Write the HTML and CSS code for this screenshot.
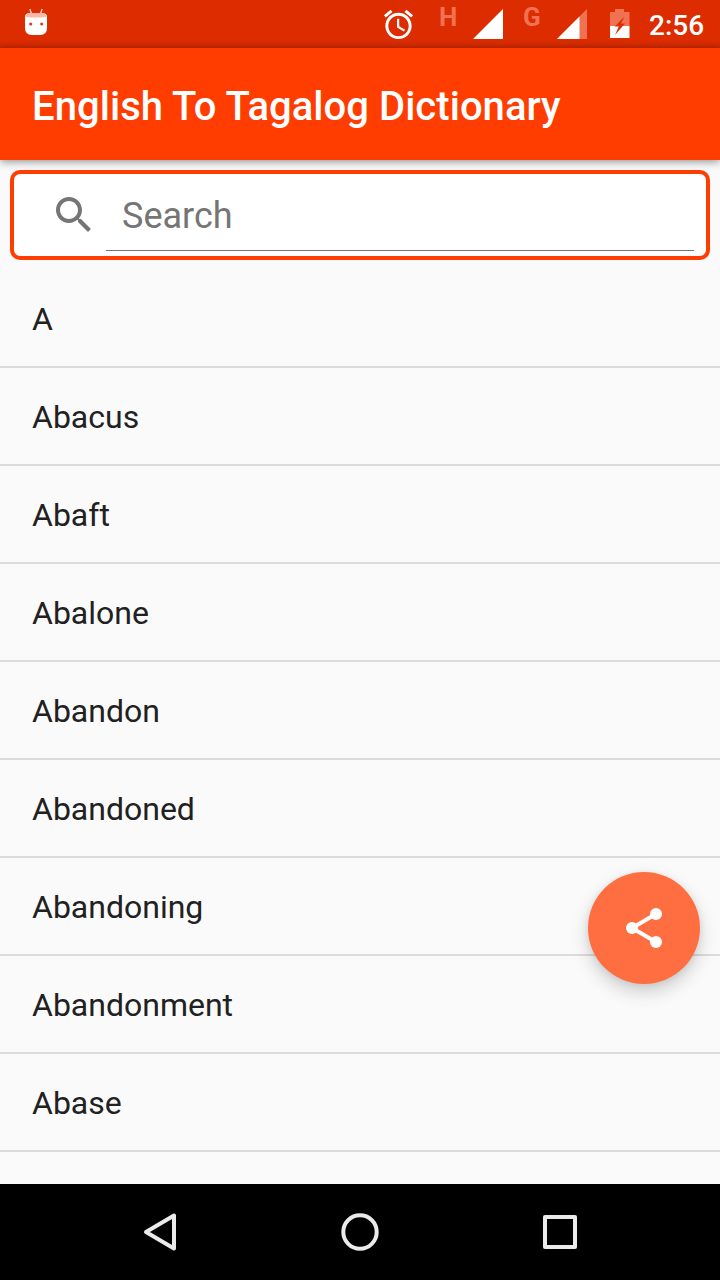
FILE: index.html
```html
<!DOCTYPE html>
<html lang="en">
<head>
    <meta charset="utf-8">
    <title>English To Tagalog Dictionary</title>
    <link rel="stylesheet" href="styles.css">
</head>
<body>
<div class="screen">
    <div class="status-bar">
        <svg class="debug-icon" width="24" height="28" viewBox="0 0 24 28">
            <path d="M5.8 1l1.6 4.5M18.2 1l-1.6 4.5" stroke="#ffc8b8" stroke-width="1.5" fill="none"/>
            <path d="M1 9Q1 5 6 5H18Q23 5 23 9V20Q23 27 16 27H8Q1 27 1 20Z" fill="#fff"/>
            <path d="M2 9Q2 5 6 5H18Q22 5 22 9Q12 10 2 9Z" fill="#ffb7a3"/>
            <circle cx="6.7" cy="16" r="1.6" fill="#d83a2b"/>
            <circle cx="17.7" cy="16" r="1.6" fill="#d83a2b"/>
        </svg>
        <div class="status-right">
            <svg class="alarm-icon" width="35" height="35" viewBox="0 0 24 24" fill="#fff">
                <path d="M22 5.72l-4.6-3.86-1.29 1.53 4.6 3.86L22 5.72zM7.88 3.39L6.6 1.86 2 5.71l1.29 1.53 4.59-3.85zM12.5 8H11v6l4.75 2.85.75-1.23-4-2.37V8zM12 4c-4.97 0-9 4.03-9 9s4.02 9 9 9c4.97 0 9-4.03 9-9s-4.03-9-9-9zm0 16c-3.87 0-7-3.13-7-7s3.13-7 7-7 7 3.13 7 7-3.13 7-7 7z"/>
            </svg>
            <span class="network">H</span>
            <svg class="signal" width="30" height="30" viewBox="0 0 30 30">
                <path d="M30 0V30H0Z" fill="#fff"/>
            </svg>
            <span class="network">G</span>
            <svg class="signal" width="30" height="30" viewBox="0 0 30 30">
                <path d="M30 0V30H0Z" fill="#f07252"/>
                <path d="M22.5 7.5V30H0Z" fill="#fff"/>
            </svg>
            <svg class="battery" width="20" height="30" viewBox="0 0 20 30">
                <path d="M5 0H14V3H19.5V17H0V3H5Z" fill="#f07252"/>
                <path d="M0 17H19.5V29H0Z" fill="#fff"/>
                <path d="M14.5 7.5L4.8 17.5H8.8L5 26L15 14.5H11Z" fill="#dd2c00"/>
            </svg>
            <span class="clock">2:56</span>
        </div>
    </div>
    <div class="app-bar">
        <h1 class="title">English To Tagalog Dictionary</h1>
    </div>
    <div class="search-box">
        <svg class="search-icon" width="48" height="48" viewBox="0 0 24 24" fill="#757575">
            <path d="M15.5 14h-.79l-.28-.27C15.41 12.59 16 11.11 16 9.5 16 5.91 13.09 3 9.5 3S3 5.91 3 9.5 5.91 16 9.5 16c1.61 0 3.09-.59 4.23-1.57l.27.28v.79l5 4.99L20.49 19l-4.99-5zm-6 0C7.01 14 5 11.99 5 9.5S7.01 5 9.5 5 14 7.01 14 9.5 11.99 14 9.5 14z"/>
        </svg>
        <div class="search-field">Search</div>
    </div>
    <ul class="words">
        <li>A</li>
        <li>Abacus</li>
        <li>Abaft</li>
        <li>Abalone</li>
        <li>Abandon</li>
        <li>Abandoned</li>
        <li>Abandoning</li>
        <li>Abandonment</li>
        <li>Abase</li>
    </ul>
    <div class="nav-bar">
        <svg width="48" height="48" viewBox="0 0 48 48">
            <path d="M10 24L38 7.5V40.5Z"/>
        </svg>
        <svg width="48" height="48" viewBox="0 0 48 48">
            <circle cx="24" cy="24" r="16.7"/>
        </svg>
        <svg width="48" height="48" viewBox="0 0 48 48">
            <rect x="9" y="9" width="30" height="30"/>
        </svg>
    </div>
    <div class="fab">
        <svg width="48" height="48" viewBox="0 0 48 48">
            <path d="M36 10L12 24L36 38" fill="none" stroke="#fff" stroke-width="4"/>
            <g fill="#fff">
                <circle cx="36" cy="10" r="6"/>
                <circle cx="12" cy="24" r="6"/>
                <circle cx="36" cy="38" r="6"/>
            </g>
        </svg>
    </div>
</div>
</body>
</html>
```
FILE: styles.css
```css
body {
    margin: 0;
    background: #fafafa;
    font-family: Roboto, "Liberation Sans", sans-serif;
}

svg {
    display: block;
    flex: none;
}

.screen {
    position: relative;
    display: flex;
    flex-direction: column;
    width: 720px;
    height: 1280px;
    overflow: hidden;
}

.status-bar {
    display: flex;
    justify-content: space-between;
    height: 48px;
    box-sizing: border-box;
    padding: 0 16px 0 24px;
    background: linear-gradient(#dd2c00 41px, #c92800);
    color: #fff;
}

.debug-icon {
    margin-top: 8px;
}

.status-right {
    display: flex;
    align-items: flex-start;
}

.alarm-icon {
    margin-top: 7px;
    margin-right: 22px;
}

.network {
    box-sizing: border-box;
    width: 35px;
    padding: 2px 0 0 1px;
    font-size: 26px;
    line-height: 30px;
    font-weight: 700;
    color: #f07252;
}

.signal {
    margin-top: 9px;
    margin-right: 19px;
}

.battery {
    margin-top: 9px;
    margin-left: 4px;
    margin-right: 19px;
}

.clock {
    width: 55px;
    font-size: 28px;
    line-height: 52px;
    font-weight: 500;
    white-space: nowrap;
}

.app-bar {
    display: flex;
    align-items: center;
    height: 112px;
    padding: 0 32px;
    background: #ff3d00;
    box-shadow: 0 2px 8px rgba(0, 0, 0, .4);
}

.title {
    margin: 6px 0 0;
    font-size: 40px;
    line-height: 48px;
    font-weight: 500;
    letter-spacing: .04px;
    color: #fff;
    white-space: nowrap;
}

.search-box {
    display: flex;
    box-sizing: border-box;
    height: 90px;
    margin: 10px;
    padding: 0 12px 5px 36px;
    border: 4px solid #ff3d00;
    border-radius: 10px;
    background: #fff;
}

.search-icon {
    margin-top: 17px;
    margin-right: 8px;
}

.search-field {
    flex: 1;
    padding-left: 16px;
    border-bottom: 1px solid #757575;
    font-size: 36px;
    line-height: 85px;
    color: #757575;
}

.words {
    flex: 1;
    margin: 0;
    padding: 0;
    list-style: none;
}

.words li {
    height: 96px;
    padding-left: 32px;
    border-bottom: 2px solid #dbdbdb;
    font-size: 32px;
    line-height: 98px;
    color: #212121;
}

.nav-bar {
    display: flex;
    justify-content: center;
    align-items: center;
    gap: 152px;
    height: 96px;
    background: #000;
}

.nav-bar svg {
    fill: none;
    stroke: #ebebeb;
    stroke-width: 4;
    stroke-linejoin: round;
}

.fab {
    position: absolute;
    right: 20px;
    bottom: 296px;
    display: flex;
    align-items: center;
    justify-content: center;
    width: 112px;
    height: 112px;
    border-radius: 50%;
    background: #ff6e40;
    box-shadow: 0 8px 18px rgba(0, 0, 0, .18), 0 1px 6px rgba(0, 0, 0, .08);
}
```
